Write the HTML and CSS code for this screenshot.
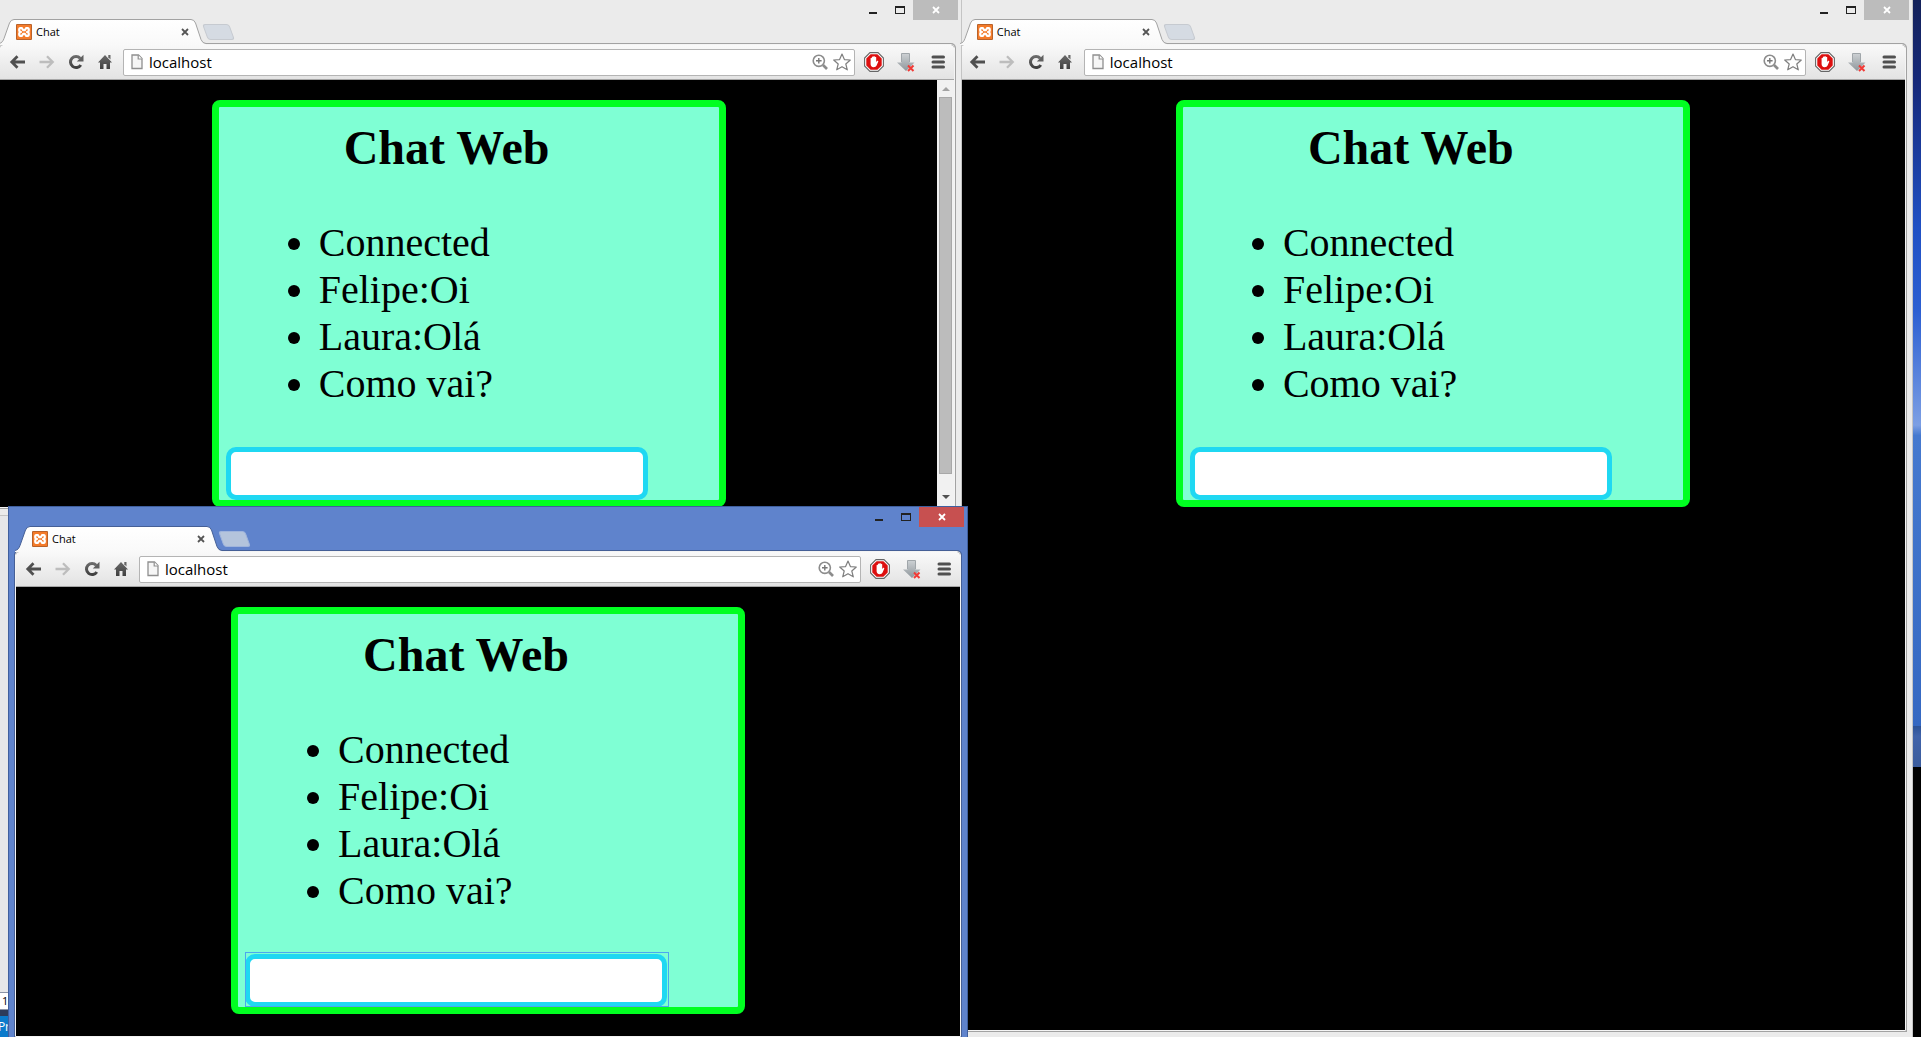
FILE: index.html
```html
<!DOCTYPE html>
<html lang="pt-BR">
<head>
<meta charset="utf-8">
<meta name="viewport" content="width=device-width, initial-scale=1">
<title>Chat</title>
<link rel="stylesheet" href="styles.css">
</head>
<body>
<svg class="sprite" aria-hidden="true">
  <defs>
    <linearGradient id="tab-fill" x1="0" y1="0" x2="0" y2="1"><stop offset="0" stop-color="#fff"/><stop offset="1" stop-color="#f9f9f9"/></linearGradient>
    <linearGradient id="dark-fill" x1="0" y1="0" x2="0" y2="1"><stop offset="0" stop-color="#6a6a6a"/><stop offset="1" stop-color="#404040"/></linearGradient>
    <linearGradient id="steel-fill" x1="0" y1="0" x2="0" y2="1"><stop offset="0" stop-color="#cdd1d4"/><stop offset="1" stop-color="#8e969b"/></linearGradient>
  </defs>
  <symbol id="i-tab" viewBox="0 0 208 25"><path d="M-1 26V24.500C2 24 3 22 4 19.500L9.500 4Q11 .5 14 .5H191Q194 .5 195.500 4L201 20.500Q202.500 24.500 206 24.500V26Z" fill="url(#tab-fill)"/><path class="tab-line" d="M-1 24.500C2 24 3 22 4 19.500L9.500 4Q11 .5 14 .5H191Q194 .5 195.500 4L201 20.500Q202.500 24.500 206 24.500" fill="none"/></symbol>
  <symbol id="i-fav" viewBox="0 0 16 16"><rect width="16" height="16" rx="1" fill="#b9622a"/><rect x="1" y="1" width="14" height="14" fill="#f47b2a"/><path d="M6 4.200H4.200Q3.200 4.200 3.200 6T5 8Q3.200 8.200 3.200 10T4.200 11.800H6L7.200 9.800H8.800L10 11.800H11.800Q12.800 11.800 12.800 10T11 8Q12.800 7.800 12.800 6T11.800 4.200H10L8.800 6.200H7.200Z" fill="none" stroke="#fff" stroke-width="2.200" stroke-linejoin="round"/></symbol>
  <symbol id="i-x" viewBox="0 0 8 8"><path d="M1 1L7 7M7 1L1 7" fill="none" stroke="currentColor" stroke-width="1.800"/></symbol>
  <symbol id="i-back" viewBox="0 0 16 16"><path d="M7.500 2.300L1.800 8L7.500 13.700M2.300 8H15" fill="none" stroke="currentColor" stroke-width="2.800" stroke-linejoin="miter"/></symbol>
  <symbol id="i-forward" viewBox="0 0 16 16"><path d="M8 2.300L13.700 8L8 13.700M13.200 8H.5" fill="none" stroke="currentColor" stroke-width="2.300"/></symbol>
  <symbol id="i-reload" viewBox="0 0 16 16"><path d="M12.800 11A5.600 5.600 0 1 1 12.200 4.200" fill="none" stroke="url(#dark-fill)" stroke-width="3"/><path d="M15.500 .8V7.500H8.800Z" fill="#606060"/></symbol>
  <symbol id="i-home" viewBox="0 0 16 16"><path d="M8 1L15 8.500H13V15H9.500V10H6.500V15H3V8.500H1Z" fill="url(#dark-fill)"/><path d="M11.300 1H13.500V5.500L11.300 3.200Z" fill="#666"/></symbol>
  <symbol id="i-page" viewBox="0 0 12 16"><path d="M1 1H7.500L11 4.500V14.500H1Z" fill="#f6f6f6" stroke="#8f8f8f" stroke-width="1.300"/><path d="M7.200 1V5H11" fill="#fff" stroke="#8f8f8f" stroke-width="1.200"/></symbol>
  <symbol id="i-zoom" viewBox="0 0 16 16"><circle cx="6.800" cy="6.800" r="5.600" fill="#fff" stroke="#8c8c8c" stroke-width="1.600"/><path d="M6.800 4V9.600M4 6.800H9.600" stroke="#777" stroke-width="1.400"/><path d="M11 11L15 15" stroke="#8c8c8c" stroke-width="2.600"/></symbol>
  <symbol id="i-star" viewBox="0 0 18 18"><path d="M9 1L11.400 6.600L17.300 7L12.800 11L14.300 16.800L9 13.700L3.700 16.800L5.200 11L.7 7L6.600 6.600Z" fill="#fff" stroke="#7f7f7f" stroke-width="1.200" stroke-linejoin="round"/></symbol>
  <symbol id="i-block" viewBox="0 0 20 20"><path d="M6 .6H14L19.400 6V14L14 19.400H6L.6 14V6Z" fill="#fff" stroke="#666" stroke-width="1.100"/><path d="M6.600 2.300H13.400L17.700 6.600V13.400L13.400 17.700H6.600L2.300 13.400V6.600Z" fill="#dd0f0f"/><path d="M6.600 10V6.200Q7.200 5.400 7.900 6.200V5Q8.600 4.100 9.300 5V4.500Q10 3.700 10.800 4.500V5.200Q11.500 4.500 12.200 5.300V10L13.200 8.800Q14.300 8.400 14.300 9.500L12.600 13.500Q12 15.200 9.600 15.200Q6.600 15 6.600 12Z" fill="#fff"/></symbol>
  <symbol id="i-download" viewBox="0 0 18 19"><path d="M4.500 .5H12.500V9.500H17.500L9 18L0 9.500H4.500Z" fill="url(#steel-fill)"/><path d="M4.500 9V.5H12.500V9" fill="none" stroke="#a0a6aa"/><path d="M11 12.500L16.500 18M16.500 12.500L11 18" stroke="#f13a36" stroke-width="2"/></symbol>
  <symbol id="i-menu" viewBox="0 0 14 14"><path d="M2 2H12.500M2 7H12.500M2 12H12.500" stroke="#505050" stroke-width="3" stroke-linecap="round"/></symbol>
  <symbol id="i-min" viewBox="0 0 10 8"><path d="M1 6H9V8H1Z" fill="#222"/></symbol>
  <symbol id="i-max" viewBox="0 0 10 8"><path d="M0 0H10V8H0ZM1 2V7H9V2Z" fill="#222" fill-rule="evenodd"/></symbol>
</svg>

<main class="desktop">
  <div class="ide" aria-hidden="true">
    <div class="ide-field">1</div>
    <div class="ide-status">Pr</div>
  </div>

  <section class="window window-right" aria-label="Chat">
    <header class="strip">
      <div class="tab">
        <svg class="tab-shape"><use href="#i-tab"/></svg>
        <svg class="favicon"><use href="#i-fav"/></svg>
        <span class="tab-title">Chat</span>
        <button class="tab-close" aria-label="Fechar guia"><svg><use href="#i-x"/></svg></button>
      </div>
      <button class="new-tab" aria-label="Nova guia"></button>
      <div class="controls">
        <button class="control" aria-label="Minimizar"><svg><use href="#i-min"/></svg></button>
        <button class="control" aria-label="Maximizar"><svg><use href="#i-max"/></svg></button>
        <button class="control close" aria-label="Fechar"><svg><use href="#i-x"/></svg></button>
      </div>
    </header>
    <div class="client">
      <nav class="toolbar">
        <button class="tool" aria-label="Voltar"><svg><use href="#i-back"/></svg></button>
        <button class="tool off" aria-label="Avançar"><svg><use href="#i-forward"/></svg></button>
        <button class="tool" aria-label="Recarregar"><svg><use href="#i-reload"/></svg></button>
        <button class="tool" aria-label="Início"><svg><use href="#i-home"/></svg></button>
        <div class="omnibox">
          <svg class="page-icon"><use href="#i-page"/></svg>
          <input class="address" aria-label="Endereço" value="localhost">
          <svg class="zoom-icon"><use href="#i-zoom"/></svg>
          <svg class="star-icon"><use href="#i-star"/></svg>
        </div>
        <button class="tool ext" aria-label="Bloqueador"><svg class="big"><use href="#i-block"/></svg></button>
        <button class="tool ext" aria-label="Baixar"><svg class="arrow"><use href="#i-download"/></svg></button>
        <button class="tool ext" aria-label="Menu"><svg class="menu"><use href="#i-menu"/></svg></button>
      </nav>
      <div class="viewport">
        <div class="page">
          <article class="chat">
            <h1>Chat Web</h1>
            <ul>
              <li>Connected</li>
              <li>Felipe:Oi</li>
              <li>Laura:Olá</li>
              <li>Como vai?</li>
            </ul>
            <input class="message" aria-label="Mensagem">
          </article>
        </div>
      </div>
    </div>
  </section>

  <section class="window window-left" aria-label="Chat">
    <header class="strip">
      <div class="tab">
        <svg class="tab-shape"><use href="#i-tab"/></svg>
        <svg class="favicon"><use href="#i-fav"/></svg>
        <span class="tab-title">Chat</span>
        <button class="tab-close" aria-label="Fechar guia"><svg><use href="#i-x"/></svg></button>
      </div>
      <button class="new-tab" aria-label="Nova guia"></button>
      <div class="controls">
        <button class="control" aria-label="Minimizar"><svg><use href="#i-min"/></svg></button>
        <button class="control" aria-label="Maximizar"><svg><use href="#i-max"/></svg></button>
        <button class="control close" aria-label="Fechar"><svg><use href="#i-x"/></svg></button>
      </div>
    </header>
    <div class="client">
      <nav class="toolbar">
        <button class="tool" aria-label="Voltar"><svg><use href="#i-back"/></svg></button>
        <button class="tool off" aria-label="Avançar"><svg><use href="#i-forward"/></svg></button>
        <button class="tool" aria-label="Recarregar"><svg><use href="#i-reload"/></svg></button>
        <button class="tool" aria-label="Início"><svg><use href="#i-home"/></svg></button>
        <div class="omnibox">
          <svg class="page-icon"><use href="#i-page"/></svg>
          <input class="address" aria-label="Endereço" value="localhost">
          <svg class="zoom-icon"><use href="#i-zoom"/></svg>
          <svg class="star-icon"><use href="#i-star"/></svg>
        </div>
        <button class="tool ext" aria-label="Bloqueador"><svg class="big"><use href="#i-block"/></svg></button>
        <button class="tool ext" aria-label="Baixar"><svg class="arrow"><use href="#i-download"/></svg></button>
        <button class="tool ext" aria-label="Menu"><svg class="menu"><use href="#i-menu"/></svg></button>
      </nav>
      <div class="viewport">
        <div class="page">
          <article class="chat">
            <h1>Chat Web</h1>
            <ul>
              <li>Connected</li>
              <li>Felipe:Oi</li>
              <li>Laura:Olá</li>
              <li>Como vai?</li>
            </ul>
            <input class="message" aria-label="Mensagem">
          </article>
        </div>
        <div class="scrollbar" aria-hidden="true">
          <span class="arrow-up"></span>
          <span class="thumb"></span>
          <span class="arrow-down"></span>
        </div>
      </div>
    </div>
  </section>

  <section class="window window-front" aria-label="Chat">
    <header class="strip">
      <div class="tab">
        <svg class="tab-shape"><use href="#i-tab"/></svg>
        <svg class="favicon"><use href="#i-fav"/></svg>
        <span class="tab-title">Chat</span>
        <button class="tab-close" aria-label="Fechar guia"><svg><use href="#i-x"/></svg></button>
      </div>
      <button class="new-tab" aria-label="Nova guia"></button>
      <div class="controls">
        <button class="control" aria-label="Minimizar"><svg><use href="#i-min"/></svg></button>
        <button class="control" aria-label="Maximizar"><svg><use href="#i-max"/></svg></button>
        <button class="control close" aria-label="Fechar"><svg><use href="#i-x"/></svg></button>
      </div>
    </header>
    <div class="client">
      <nav class="toolbar">
        <button class="tool" aria-label="Voltar"><svg><use href="#i-back"/></svg></button>
        <button class="tool off" aria-label="Avançar"><svg><use href="#i-forward"/></svg></button>
        <button class="tool" aria-label="Recarregar"><svg><use href="#i-reload"/></svg></button>
        <button class="tool" aria-label="Início"><svg><use href="#i-home"/></svg></button>
        <div class="omnibox">
          <svg class="page-icon"><use href="#i-page"/></svg>
          <input class="address" aria-label="Endereço" value="localhost">
          <svg class="zoom-icon"><use href="#i-zoom"/></svg>
          <svg class="star-icon"><use href="#i-star"/></svg>
        </div>
        <button class="tool ext" aria-label="Bloqueador"><svg class="big"><use href="#i-block"/></svg></button>
        <button class="tool ext" aria-label="Baixar"><svg class="arrow"><use href="#i-download"/></svg></button>
        <button class="tool ext" aria-label="Menu"><svg class="menu"><use href="#i-menu"/></svg></button>
      </nav>
      <div class="viewport">
        <div class="page">
          <article class="chat">
            <h1>Chat Web</h1>
            <ul>
              <li>Connected</li>
              <li>Felipe:Oi</li>
              <li>Laura:Olá</li>
              <li>Como vai?</li>
            </ul>
            <input class="message active" aria-label="Mensagem">
          </article>
        </div>
      </div>
    </div>
  </section>
</main>
</body>
</html>
```
FILE: styles.css
```css
* { box-sizing: border-box; }

body {
  margin: 0;
  background: #000;
  font-family: "Open Sans", "Noto Sans", sans-serif;
}

button {
  margin: 0;
  padding: 0;
  border: 0;
  background: none;
}

svg { display: block; overflow: visible; }
symbol { overflow: visible; }
.sprite { position: absolute; width: 0; height: 0; }

.desktop {
  position: relative;
  height: 100vh;
  overflow: hidden;
  background: linear-gradient(#14225a 0, #16297a 8%, #2050c4 22%, #2c5fd2 30%, #7c9fe4 41%, #4579cf 42%, #3568c2 70%, #2c5296 70%, #4063aa 71%, #3b5c9c 74%, #000 74%);
}

/* Editor showing behind the windows at the left edge */
.ide {
  display: flex;
  flex-direction: column;
  justify-content: flex-end;
  width: 16px;
  height: 100%;
  background: #e6e7e9;
}
.ide-field {
  height: 18px;
  padding-left: 2px;
  border: 1px solid #8a93a6;
  border-left-width: 0;
  background: #fff;
  font-size: 11px;
  line-height: 16px;
}
.ide-status {
  height: 27px;
  border-top: 6px solid #2d3b5a;
  background: #0a7acb;
  color: #fff;
  font-size: 12px;
  line-height: 22px;
  direction: rtl;
  padding-right: 6px;
}

/* Browser windows */
.window {
  --frame: #ebebeb;
  --edge: #c4c4c4;
  --line: #a2a2a2;
  --newtab: #d5dbe3;
  --close: #bcbcbc;
  position: absolute;
  display: flex;
  flex-direction: column;
  border: 1px solid var(--edge);
  background: var(--frame);
}
.window-right { top: -1px; bottom: -2px; left: 49.6%; right: 8px; }
.window-left { top: -1px; bottom: 50.2%; left: -8px; right: 49.9%; }
.window-front {
  --frame: #5f83cc;
  --edge: #3f5f9e;
  --line: #455f96;
  --newtab: #b4c4dc;
  --close: #c75050;
  top: 48.8%;
  bottom: -8px;
  left: 8px;
  right: 49.6%;
}

.strip {
  display: flex;
  align-items: flex-end;
  height: 43px;
  flex: none;
  padding: 0 3px 0 7px;
}
.tab {
  position: relative;
  z-index: 1;
  display: flex;
  align-items: center;
  width: 202px;
  height: 24px;
  padding: 2px 13px 0 16px;
}
.tab-shape {
  position: absolute;
  top: 0;
  left: 0;
  width: 208px;
  height: 25px;
}
.tab-line { stroke: var(--line); }
.favicon { position: relative; width: 16px; height: 16px; }
.tab-title {
  position: relative;
  flex: 1;
  margin-left: 4px;
  font-size: 11px;
  line-height: 16px;
}
.tab-close { position: relative; color: #555; }
.tab-close svg { width: 8px; height: 8px; }
.new-tab {
  width: 27px;
  height: 16px;
  margin: 0 0 3px 3px;
  border: 1px solid #c6cad0;
  border-radius: 3px;
  background: var(--newtab);
  transform: skewX(20deg);
}
.window-front .new-tab { border-color: #9fb4dc; }

.controls {
  display: flex;
  align-self: flex-start;
  margin-left: auto;
}
.control {
  display: grid;
  place-items: center;
  width: 27px;
  height: 20px;
}
.control svg { width: 10px; height: 8px; }
.close { width: 45px; background: var(--close); color: #fff; }

.client {
  flex: 1;
  min-height: 0;
  display: flex;
  flex-direction: column;
  margin: 1px 6px 7px;
  border: 1px solid #f4f4f4;
  border-radius: 4px 4px 0 0;
  background: #000;
  box-shadow: 0 0 0 1px var(--line);
}
.toolbar {
  display: flex;
  align-items: center;
  flex: none;
  height: 35px;
  padding: 0 0 0 3px;
  border-bottom: 1px solid #a6a6a6;
  border-radius: 3px 3px 0 0;
  background: linear-gradient(#f9f9f9, #e3e3e3);
}
.tool {
  display: grid;
  place-items: center;
  width: 29px;
  height: 34px;
  color: #505050;
}
.tool svg { width: 16px; height: 16px; }
.tool.off { color: #bdbdbd; }
.tool.ext { width: 32px; }
.tool .big { width: 20px; height: 20px; }
.tool .arrow { width: 18px; height: 19px; }
.tool .menu { width: 14px; height: 14px; }

.omnibox {
  flex: 1;
  display: flex;
  align-items: center;
  height: 27px;
  margin: 0 3px 0 4px;
  padding: 0 3px 0 7px;
  border: 1px solid #b4b4b4;
  border-radius: 2px;
  background: #fff;
}
.page-icon { width: 12px; height: 16px; }
.address {
  flex: 1;
  min-width: 0;
  height: 24px;
  margin-left: 6px;
  padding: 0;
  border: 0;
  outline: 0;
  background: none;
  color: #000;
  font: 15px/24px "Open Sans", "Noto Sans", sans-serif;
}
.zoom-icon { width: 16px; height: 16px; margin-right: 5px; }
.star-icon { width: 18px; height: 18px; }

.viewport {
  flex: 1;
  min-height: 0;
  display: flex;
  overflow: hidden;
  background: #000;
}
.page { flex: 1; padding-top: 20px; }

/* Scroll bar of the left window */
.scrollbar {
  display: flex;
  flex-direction: column;
  align-items: center;
  width: 17px;
  padding: 7px 0 8px;
  background: #f1f1f1;
}
.arrow-up, .arrow-down {
  border: 4px solid transparent;
  border-top-width: 0;
  border-bottom-color: #a3a3a3;
}
.arrow-down {
  border-top: 4px solid #505050;
  border-bottom-width: 0;
}
.thumb {
  flex: 1;
  width: 13px;
  margin: 6px 0 21px;
  border: 1px solid #a8a8a8;
  background: #bcbcbc;
}

/* Chat page */
.chat {
  position: relative;
  width: 514px;
  max-width: 100%;
  margin: 0 auto;
  padding-top: 13px;
  border: 7px solid #00ff21;
  border-radius: 8px;
  background: #7fffd4;
  color: #000;
  font-family: "Liberation Serif", "Times New Roman", serif;
}
.chat h1 {
  margin: 0 0 43px;
  padding-left: 125px;
  font-size: 48px;
  line-height: 56px;
}
.chat ul {
  margin: 0 0 40px;
  padding-left: 100px;
  font-size: 40px;
  line-height: 47px;
}
.message {
  display: block;
  width: 422px;
  max-width: 100%;
  height: 53px;
  margin-left: 7px;
  padding: 0 8px;
  border: 5px solid #1fd8f2;
  border-radius: 10px;
  background: #fff;
  font: inherit;
  font-size: 32px;
}

/* Square focus ring drawn over the rounded border */
.chat:has(.active)::after {
  content: "";
  position: absolute;
  bottom: 0;
  left: 7px;
  width: 422px;
  height: 53px;
  border: 1px solid #4ba6f0;
  pointer-events: none;
}
```
